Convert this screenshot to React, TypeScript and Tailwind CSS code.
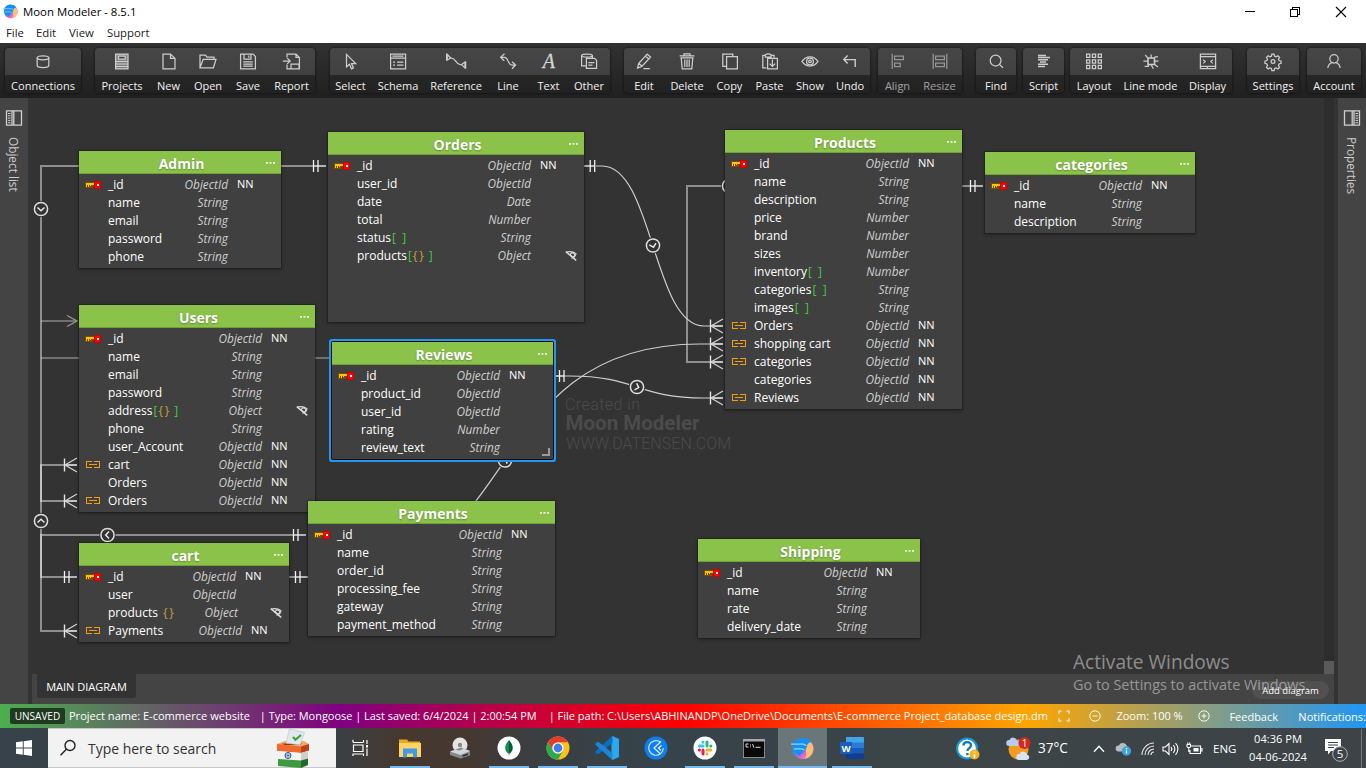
import type { ReactNode } from "react";

/* ---------- toolbar icons ---------- */

function Ico({ children, w = 18 }: { children: ReactNode; w?: number }) {
  return (
    <svg width={w} height="18" viewBox={`0 0 ${w} 18`} fill="none" stroke="#cdcdcd" strokeWidth="1.25" className="shrink-0 overflow-visible">
      {children}
    </svg>
  );
}

const icons: Record<string, ReactNode> = {
  Connections: (
    <Ico>
      <ellipse cx="9" cy="4.8" rx="5.8" ry="2" />
      <path d="M3.2 4.8v7.800c0 1.200 2.600 2 5.800 2s5.800-.8 5.800-2V4.800" />
    </Ico>
  ),
  Projects: (
    <Ico>
      <path d="M2.600 1h12.400v14.800H2.600z" fill="#808080" />
      <path d="M5.500 3.200h6.800v2.800H5.500z" fill="#444" />
      <path d="M3 8.500h12M3 11h12M3 13.500h12" strokeWidth="1" />
    </Ico>
  ),
  New: (
    <Ico>
      <path d="M3 1h7.500L15 5.400v10.400H3zM10.500 1v4.400H15" />
    </Ico>
  ),
  Open: (
    <Ico w={20}>
      <path d="M2 14.800V2h5.500L9 4h7v2.400M2 14.800L5.200 6.400H18l-2.600 8.400z" />
    </Ico>
  ),
  Save: (
    <Ico>
      <path d="M1.600 1H14l2.400 2.400v12.400H1.600zM5 1v5h7V1M9.800 2.400v2.400M4.200 8.800h9.600M4.200 11h9.600M4.200 13.200h9.600" />
    </Ico>
  ),
  Report: (
    <Ico w={20}>
      <path d="M5 4.400V1h9l3.400 3.400v11.400H5v-4.400M14 1v3.400h3.400M9 11h8v4.800H9zM.8 8h7M5.200 5.100l3 2.900-3 2.900" />
    </Ico>
  ),
  Select: (
    <Ico>
      <path d="M4.500 1.400v12.400l3-2.600 2 4.600 2-.9-2-4.400h4.200z" />
    </Ico>
  ),
  Schema: (
    <Ico>
      <path d="M1.600 1h15v14.800h-15zM1.600 5h15M3.500 3h11M4 9h2M8 9h6.500M4 12.200h2M8 12.200h6.500" />
    </Ico>
  ),
  Reference: (
    <Ico w={22}>
      <path d="M1.600 .6v7.200M1.600 .8l4 4.200-4 2.600M5.200 5h1.400c4 0 4.600 6.600 8.600 6.600h1.600M20.600 8.400v7.400M20.600 8.600l-4 3 4 4" />
      <path d="M2 2.500v4M20.200 10v4" strokeWidth="1.800" />
    </Ico>
  ),
  Line: (
    <Ico>
      <path d="M5.500 .8L1.600 4.200l3.600 3.600M1.600 4.400h3.800c4.400 0 3 7.600 7.600 7.600h3.400M13 8.800l3.600 3.200-3.600 3.800" />
    </Ico>
  ),
  Text: (
    <Ico w={20}>
      <text x="9.800" y="15" fontSize="20" fontStyle="italic" fontFamily="Liberation Serif, serif" textAnchor="middle" fill="#d6d6d6" stroke="#d6d6d6" strokeWidth="0.3">
        A
      </text>
    </Ico>
  ),
  Other: (
    <Ico>
      <ellipse cx="7" cy="2.600" rx="5.400" ry="1.600" />
      <path d="M1.600 2.600v10.200h4.600M12.400 2.600v2.600M6.400 5.400h8.200l2 2v8H6.400zM8.400 9.600h6M8.400 12h4" />
    </Ico>
  ),
  Edit: (
    <Ico>
      <path d="M12.200 1.200l3.400 2.800-8.800 9.400-4.200 1.600 1-4.400zM10.600 3.200l3.200 2.800M4 10.400l2.800 2.600M8.400 15.600h6.400" />
    </Ico>
  ),
  Delete: (
    <Ico>
      <path d="M1.600 2.800h14.800M6 2.600V.8h6v1.800M3.200 4.800l1 11h9.600l1-11M2.400 4.800h13.200M6.800 6.400V14M9 6.400V14M11.200 6.400V14" />
    </Ico>
  ),
  Copy: (
    <Ico>
      <path d="M5.600 3.600h10.800v12.200H5.600zM5.400 13.400H1.800V1h10v2.400" />
    </Ico>
  ),
  Paste: (
    <Ico>
      <path d="M5.400 14.800H1.800V2.400h2.600M10 2.400h3v2M4.400 4V1.600l2-.8h1.600l2 .8V4zM6.600 5.400h9.800v10.400H6.600zM11.400 6.400v7M8.600 10.600l2.800 2.800 2.800-2.800" />
    </Ico>
  ),
  Show: (
    <Ico>
      <path d="M1 8.400c2-3 5-4.600 8-4.600s6 1.600 8 4.600c-2 3-5 4.600-8 4.600s-6-1.600-8-4.600z" />
      <circle cx="9" cy="8.400" r="3.400" />
      <circle cx="9" cy="8.400" r="1.300" />
    </Ico>
  ),
  Undo: (
    <Ico>
      <path d="M6.600 2.600L2.800 6.600l3.800 4M2.800 6.600h11.400V14" strokeWidth="1.400" />
    </Ico>
  ),
  Align: (
    <Ico>
      <path d="M3.200 .8V16M5.600 3h8.800v3.600H5.600zM5.600 10h5.600v3.600H5.600z" />
    </Ico>
  ),
  Resize: (
    <Ico>
      <path d="M2.200 .8V16M15.800 .8V16M4.600 3h8.800v3.600H4.600zM4.600 10h8.800v3.600H4.600z" />
    </Ico>
  ),
  Find: (
    <Ico>
      <circle cx="8.600" cy="7.600" r="5.400" />
      <path d="M12.400 11.400l3.600 3.400" />
    </Ico>
  ),
  Script: (
    <Ico>
      <path d="M3 2.400h8M3 4.600h12M3 6.800h10M5 9h6M3 11.200h10M3 13.400h7" strokeWidth="1.500" />
    </Ico>
  ),
  Layout: (
    <Ico>
      <path d="M1.600 1.200h3.200v3.200H1.600zM7.400 1.200h3.200v3.200H7.400zM13.200 1.200h3.200v3.200h-3.200zM1.600 6.800h3.200V10H1.600zM7.400 6.800h3.200V10H7.400zM13.200 6.800h3.200V10h-3.200zM1.600 12.400h3.200v3.200H1.600zM7.400 12.400h3.200v3.200H7.400zM13.200 12.400h3.200v3.200h-3.200z" />
    </Ico>
  ),
  "Line mode": (
    <Ico>
      <path d="M6 5h6.500v6.500H6z" strokeWidth="1.600" />
      <path d="M9.200 5V1.600M3.200 2L6.400 5.600M16 3.800h-3.500M1.400 8.200H6M12.500 8.200h4M2.600 13.400h3.800v-2M9 11.500l2.400 4.200M12 11l4 3" />
    </Ico>
  ),
  Display: (
    <Ico>
      <path d="M1.400 1h15.200v14.600H1.400zM1.400 3.600h15.200M1.400 13.400h15.200M4.200 6.800l2 1.800-2 1.800M13.800 6.800l-2 1.800 2 1.800M8.400 13.400v2" />
    </Ico>
  ),
  Settings: (
    <Ico>
      <circle cx="9" cy="8.400" r="1.900" />
      <path d="M7.900 1.200h2.200l.5 2 1.500.6 1.800-1 1.600 1.600-1 1.800.6 1.400 2 .6v2.200l-2 .6-.6 1.500 1 1.800-1.600 1.600-1.800-1-1.500.6-.5 2H7.900l-.5-2-1.500-.6-1.800 1-1.600-1.600 1-1.800-.6-1.500-2-.6V8.200l2-.6.6-1.400-1-1.800 1.600-1.600 1.800 1 1.500-.6z" />
    </Ico>
  ),
  Account: (
    <Ico>
      <circle cx="9" cy="5.800" r="4.200" />
      <path d="M2.800 15c.4-3 2-4.600 4-5.400M15.200 15c-.4-3-2-4.600-4-5.400" />
    </Ico>
  ),
};

type Btn = [name: string, width: string];
const groups: { gap: string; dim?: boolean; items: Btn[] }[] = [
  { gap: "ml-[5px]", items: [["Connections", "w-[76px]"]] },
  {
    gap: "ml-[14px]",
    items: [
      ["Projects", "w-[54px]"],
      ["New", "w-[39px]"],
      ["Open", "w-[40px]"],
      ["Save", "w-[40px]"],
      ["Report", "w-[47px]"],
    ],
  },
  {
    gap: "ml-[15px]",
    items: [
      ["Select", "w-[41px]"],
      ["Schema", "w-[54px]"],
      ["Reference", "w-[62px]"],
      ["Line", "w-[42px]"],
      ["Text", "w-[39px]"],
      ["Other", "w-[42px]"],
    ],
  },
  {
    gap: "ml-[14px]",
    items: [
      ["Edit", "w-[40px]"],
      ["Delete", "w-[46px]"],
      ["Copy", "w-[39px]"],
      ["Paste", "w-[41px]"],
      ["Show", "w-[40px]"],
      ["Undo", "w-[40px]"],
    ],
  },
  {
    gap: "ml-[8px]",
    dim: true,
    items: [
      ["Align", "w-[39px]"],
      ["Resize", "w-[45px]"],
    ],
  },
  { gap: "ml-[14px]", items: [["Find", "w-[40px]"]] },
  { gap: "ml-[7px]", items: [["Script", "w-[41px]"]] },
  {
    gap: "ml-[6px]",
    items: [
      ["Layout", "w-[48px]"],
      ["Line mode", "w-[65px]"],
      ["Display", "w-[49px]"],
    ],
  },
  { gap: "ml-[15px]", items: [["Settings", "w-[52px]"]] },
  { gap: "ml-[8px]", items: [["Account", "w-[54px]"]] },
];

function MoonLogo({ size, id }: { size: number; id: string }) {
  return (
    <svg width={size} height={size} viewBox="0 0 24 24">
      <defs>
        <linearGradient id={id} x1="0.2" y1="0.3" x2="0.7" y2="1">
          <stop offset="0.35" stopColor="#1e9bf5" />
          <stop offset="0.6" stopColor="#c65fe0" />
          <stop offset="0.85" stopColor="#ff6fc0" />
        </linearGradient>
      </defs>
      <circle cx="12.500" cy="12" r="11" fill={`url(#${id})`} />
      <path d="M17 3.500c5 2 7 6 6.300 10-.8 5-4.300 8.500-8.800 9.300 1.500-2 1.500-5 1-8 0-4 3-6 1.500-11.300z" fill="#ffbf73" />
      <path d="M1.800 9C3 4 8 .8 13 1c4 .2 6.500 2 8 4.500-3 .5-5 2.500-5 5-.5 4-4.500 5-6.500 9C6 18 1 14 1.800 9z" fill="#1590f0" />
      <path d="M0 7.500h13l3 1.500M3 12.500h8l3 1" stroke="#8fd3ff" strokeWidth="1.300" fill="none" />
    </svg>
  );
}

function TitleBar() {
  return (
    <div className="h-[43px] bg-white text-[#000]">
      <div className="flex h-[23px] items-center pl-[3px]">
        <MoonLogo size={15} id="logo-small" />
        <span className="ml-[5px] text-[11.400px] leading-[23px]">Moon Modeler - 8.5.1</span>
        <svg className="mr-[18px] ml-auto" width="104" height="20" viewBox="0 0 104 20" fill="none" stroke="#000" strokeWidth="1" shapeRendering="crispEdges">
          <path d="M1 9.500h10" />
          <path d="M46.500 7.500h7v7h-7zM48.500 7V5.500h7v7H54" />
          <path d="M92 5l10 10M102 5l-10 10" shapeRendering="auto" strokeWidth="1.100" />
        </svg>
      </div>
      <div className="flex h-5 items-center text-[11.350px] text-[#222]">
        <span className="ml-[6px]">File</span>
        <span className="ml-[12px]">Edit</span>
        <span className="ml-[13px]">View</span>
        <span className="ml-[13px]">Support</span>
      </div>
    </div>
  );
}

function Toolbar() {
  return (
    <div className="flex h-[55px] bg-gradient-to-b from-[#323232] to-[#202020] pt-[5px]">
      {groups.map((g) => (
        <div
          key={g.items[0][0]}
          className={`${g.gap} flex h-[45px] rounded-[4px] bg-[linear-gradient(#464646_0px,#404040_27px,#262626_27px,#222222_45px)] shadow-[0_0_2px_1px_rgba(0,0,0,0.35)]`}
        >
          {g.items.map(([name, w]) => (
            <div key={name} className={`${w} flex flex-col items-center pt-[5px] ${g.dim ? "opacity-60" : ""}`}>
              {icons[name]}
              <span className="mt-[7px] text-[11px] leading-[16px] whitespace-nowrap text-[#f0f0f0]">{name}</span>
            </div>
          ))}
        </div>
      ))}
    </div>
  );
}

/* ---------- diagram ---------- */

type Mark = "array" | "objectArray" | "object";
interface Row {
  name: string;
  type: string;
  nn?: boolean;
  icon?: "key" | "link";
  mark?: Mark;
  hidden?: boolean;
  shift?: string;
}
interface Entity {
  id: string;
  title: string;
  x: number;
  y: number;
  w: number;
  h: number;
  selected?: boolean;
  rows: Row[];
}

const id: Row = { name: "_id", type: "ObjectId", nn: true, icon: "key" };
const s = (name: string): Row => ({ name, type: "String" });
const n = (name: string): Row => ({ name, type: "Number" });
const o = (name: string, nn = true): Row => ({ name, type: "ObjectId", nn });
const link = (name: string): Row => ({ name, type: "ObjectId", nn: true, icon: "link" });

const entities: Entity[] = [
  { id: "admin", title: "Admin", x: 79, y: 151, w: 202, h: 117, rows: [id, s("name"), s("email"), s("password"), s("phone")] },
  {
    id: "orders",
    title: "Orders",
    x: 328,
    y: 132,
    w: 256,
    h: 190,
    rows: [
      id,
      o("user_id", false),
      { name: "date", type: "Date" },
      n("total"),
      { name: "status", type: "String", mark: "array" },
      { name: "products", type: "Object", mark: "objectArray", hidden: true },
    ],
  },
  {
    id: "users",
    title: "Users",
    x: 79,
    y: 305,
    w: 236,
    h: 207,
    rows: [
      id,
      s("name"),
      s("email"),
      s("password"),
      { name: "address", type: "Object", mark: "objectArray", hidden: true },
      s("phone"),
      o("user_Account"),
      link("cart"),
      o("Orders"),
      link("Orders"),
    ],
  },
  {
    id: "cart",
    title: "cart",
    x: 79,
    y: 543,
    w: 210,
    h: 99,
    rows: [
      id,
      o("user", false),
      { name: "products", type: "Object", mark: "object", hidden: true, shift: "mr-[-2px]" },
      { ...link("Payments"), shift: "mr-[-6px]" },
    ],
  },
  {
    id: "payments",
    title: "Payments",
    x: 308,
    y: 501,
    w: 247,
    h: 135,
    rows: [id, s("name"), s("order_id"), s("processing_fee"), s("gateway"), s("payment_method")],
  },
  {
    id: "reviews",
    title: "Reviews",
    x: 332,
    y: 342,
    w: 221,
    h: 117,
    selected: true,
    rows: [id, o("product_id", false), o("user_id", false), n("rating"), s("review_text")],
  },
  {
    id: "products",
    title: "Products",
    x: 725,
    y: 130,
    w: 237,
    h: 279,
    rows: [
      id,
      s("name"),
      s("description"),
      n("price"),
      n("brand"),
      n("sizes"),
      { ...n("inventory"), mark: "array" },
      { ...s("categories"), mark: "array" },
      { ...s("images"), mark: "array" },
      link("Orders"),
      link("shopping cart"),
      link("categories"),
      o("categories"),
      link("Reviews"),
    ],
  },
  { id: "categories", title: "categories", x: 985, y: 152, w: 210, h: 81, rows: [id, s("name"), s("description")] },
  { id: "shipping", title: "Shipping", x: 698, y: 539, w: 222, h: 99, rows: [id, s("name"), s("rate"), s("delivery_date")] },
];

function KeyIcon() {
  return (
    <svg width="17" height="10" viewBox="0 0 17 10" shapeRendering="crispEdges">
      <path d="M0 2h10v4H8v2H0z" fill="#7a4d00" />
      <path d="M1 3h9v2H1zM1 5h1v2H1zM3 5h1v2H3zM5 5h1v1H5z" fill="#ffc400" />
      <path d="M9 1h7v8H9z" fill="#d00000" />
      <path d="M10 2h5v6h-5z" fill="#ff0000" />
      <path d="M12 4h2v2h-2z" fill="#fff" />
    </svg>
  );
}

function LinkIcon() {
  return (
    <svg width="16" height="8" viewBox="0 0 16 8" fill="none" stroke="#f59e0b" strokeWidth="1" shapeRendering="crispEdges">
      <path d="M7 .5H1.500v6H7M9 .5h5.500v6H9M4 3.500h8" />
    </svg>
  );
}

function HiddenIcon() {
  return (
    <svg width="13" height="12" viewBox="0 0 13 12" fill="none" stroke="#dcdcdc" strokeWidth="1.100">
      <path d="M1 2.200c4-1.200 7.500-.4 10 1.400-.4 2.400-2 4.200-4.600 4.600" />
      <ellipse cx="7.600" cy="4.800" rx="2.200" ry="1.700" transform="rotate(30 7.600 4.800)" />
      <path d="M.8 1.600l10.400 8.800" strokeWidth="1.500" />
    </svg>
  );
}

function MarkText({ mark }: { mark: Mark }) {
  if (mark === "array") return <span className="ml-px whitespace-pre text-[#3ccf3c]">{"[  ]"}</span>;
  if (mark === "object") return <span className="ml-[5px] tracking-[1.800px] text-[#c9a03a]">{"{}"}</span>;
  return (
    <span className="ml-px whitespace-pre text-[#3ccf3c]">
      [<span className="ml-px tracking-[1.900px] text-[#c9a03a]">{"{}"}</span>
      {" ]"}
    </span>
  );
}

function EntityCard({ e }: { e: Entity }) {
  return (
    <div
      className={`absolute bg-[#404040] ${
        e.selected
          ? "rounded-[1px] shadow-[0_0_0_1px_#0b0b0b,0_0_0_3px_#2196f3]"
          : "shadow-[0_0_0_1px_rgba(0,0,0,0.18),0_1px_4px_rgba(0,0,0,0.4)]"
      }`}
      style={{ left: e.x - 28, top: e.y - 98, width: e.w, height: e.h }}
    >
      <div className="relative flex h-[23px] items-center justify-center border-b border-[#6fa233] bg-[#8bc34a] pl-[3px]">
        <span className="mt-[3px] text-[14px] leading-5 font-bold text-white [text-shadow:0_1px_2px_rgba(0,0,0,0.3)]">{e.title}</span>
        <svg className="absolute top-[11px] right-[6px]" width="9" height="2" viewBox="0 0 9 2" fill="#f0f8e4">
          <path d="M0 0h2v1.700H0zM3.500 0h2v1.700h-2zM7 0h2v1.700H7z" />
        </svg>
      </div>
      <div className="pt-px">
        {e.rows.map((r, i) => (
          <div key={i} className="relative flex h-[18px] items-center pr-[53px]">
            <div className="mt-px flex w-[29px] shrink-0 items-center pl-[6px]">
              {r.icon === "key" && <KeyIcon />}
              {r.icon === "link" && <LinkIcon />}
            </div>
            <span className="mt-px text-[12px] leading-[18px] whitespace-nowrap text-white">
              {r.name}
              {r.mark && <MarkText mark={r.mark} />}
            </span>
            <span className={`relative ml-auto text-[11.800px] leading-[18px] text-[#cfcfcf] ${r.shift ?? ""}`}>
              <i>{r.type}</i>
              {r.nn && <span className="absolute top-0 left-full ml-[9px] text-[11px] text-white">NN</span>}
            </span>
            {r.hidden && (
              <span className="absolute top-[4px] right-[6px]">
                <HiddenIcon />
              </span>
            )}
          </div>
        ))}
      </div>
      {e.selected && <div className="absolute right-[3px] bottom-[3px] h-[8px] w-[8px] border-r-2 border-b-2 border-[#9a9a9a]" />}
    </div>
  );
}

function Crow({ x, y }: { x: number; y: number }) {
  return (
    <g transform={`translate(${x} ${y})`}>
      <path d="M-13 0H0" stroke="#c4c4c4" strokeWidth="2" />
      <path d="M-12.500 -6.500V6.500" stroke="#e6e6e6" strokeWidth="1.400" />
      <path d="M0 -7L-12 0L0 7" stroke="#d6d6d6" strokeWidth="1.200" />
    </g>
  );
}

function Bars({ x, y, end }: { x: number; y: number; end: number }) {
  return (
    <g>
      <path d={`M${Math.min(x, end)} ${y}H${Math.max(x + 4.5, end)}`} stroke="#b4b4b4" strokeWidth="2" />
      <path d={`M${x} ${y - 6}v12M${x + 4.5} ${y - 6}v12`} stroke="#f2f2f2" strokeWidth="1.300" />
    </g>
  );
}

function Knob({ x, y, r = 0 }: { x: number; y: number; r?: number }) {
  return (
    <g transform={`translate(${x} ${y})`}>
      <circle r="8.200" fill="#333" />
      <circle r="6.600" stroke="#dedede" strokeWidth="1.500" fill="#333" />
      <path d="M-3.500 -1.500L0 1.800L3.500 -1.500" transform={`rotate(${r})`} stroke="#e8e8e8" strokeWidth="1.500" />
    </g>
  );
}

function Canvas() {
  return (
    <div className="relative h-[576px] w-[1296px] overflow-hidden bg-[#333]">
      <svg className="absolute inset-0" width="1296" height="576" viewBox="28 98 1296 576" fill="none">
        <g fill="#4b4b4b" fontFamily="Roboto, sans-serif">
          <text x="565" y="409.500" fontSize="16" textLength="75" className="font-light">Created in</text>
          <text x="565.500" y="430" fontSize="20.500" fontWeight="700" textLength="134">Moon Modeler</text>
          <text x="566" y="448.500" fontSize="16" textLength="165" className="font-light">WWW.DATENSEN.COM</text>
        </g>
        <g stroke="#fff" strokeOpacity="0.450" strokeWidth="2">
          <path d="M326 166H41V501H77" />
          <path d="M77 465H41V577H77" />
          <path d="M77 631H41V535H306" />
          <path d="M41 321H76M41 358H332" strokeOpacity="0.300" />
          <path d="M289 577H310" />
          <path d="M723 186H687V362H712" />
          <path d="M960 186H983" />
        </g>
        <path d="M67 315.500L77 321L67 326.500" stroke="#999" strokeWidth="1.300" />
        <path d="M596 166H602C653 166 653 326 704 326H712" stroke="#cfcfcf" strokeWidth="1.200" />
        <path d="M562 376H569C637 376 637 398 704 398H712" stroke="#cfcfcf" strokeWidth="1.200" />
        <path d="M712 344H700C478 344 525 577 330 577" stroke="#cfcfcf" strokeWidth="1.200" />
        <Bars x={313.5} y={166} end={326} />
        <Bars x={590.2} y={166} end={584} />
        <Bars x={559.5} y={376} end={555} />
        <Bars x={970.5} y={186} end={983} />
        <Bars x={64.5} y={577} end={77} />
        <Bars x={293.5} y={535} end={306} />
        <Bars x={295.5} y={577} end={308} />
        <Crow x={77} y={465} />
        <Crow x={77} y={501} />
        <Crow x={77} y={631} />
        <Crow x={723} y={326} />
        <Crow x={723} y={344} />
        <Crow x={723} y={362} />
        <Crow x={723} y={398} />
        <Knob x={41} y={209} />
        <Knob x={41} y={521} r={180} />
        <Knob x={107.5} y={535} r={90} />
        <Knob x={653} y={245.5} r={-15} />
        <Knob x={637} y={387} r={-72} />
        <Knob x={505} y={460.5} r={215} />
        <Knob x={729} y={186} r={90} />
      </svg>
      {entities.map((e) => (
        <EntityCard key={e.id} e={e} />
      ))}
    </div>
  );
}

function PanelIcon({ flip }: { flip?: boolean }) {
  return (
    <svg width="18" height="16" viewBox="0 0 18 16" fill="none" stroke="#cfcfcf" strokeWidth="1.300" className={flip ? "-scale-x-100" : ""}>
      <path d="M1.500 .8h15v14.400h-15zM7 .8v14.400M8.800 .8v14.400" />
      <path d="M3 3.500h2.500M3 5.800h2.500M3 8.100h2.500M3 10.400h2.500M3 12.700h2.500" strokeWidth="1" />
    </svg>
  );
}

function SidePanel({ label, flip }: { label: string; flip?: boolean }) {
  return (
    <div className="flex w-7 shrink-0 flex-col items-center bg-[#444] pt-[12px]">
      <PanelIcon flip={flip} />
      <span className="mt-[10.500px] text-[11.800px] leading-[14px] text-[#cccccc] [writing-mode:vertical-rl]">{label}</span>
    </div>
  );
}

function StatusBar() {
  return (
    <div className="flex h-6 items-center overflow-hidden bg-[linear-gradient(90deg,#4caf50_0%,#800080_25%,#ff0000_50%,#ffa500_75%,#2196f3_100%)] text-[11px] whitespace-nowrap text-white">
      <span className="ml-[10px] h-4 w-[55px] rounded-[2px] bg-[#1f3a1f] text-center text-[10px] leading-4">UNSAVED</span>
      <span className="ml-1 w-[191px] text-[11.050px]">Project name: E-commerce website</span>
      <span className="w-[289px] text-[10.950px]">| Type: Mongoose | Last saved: 6/4/2024 | 2:00:54 PM</span>
      <span className="w-[510px]">| File path: C:\Users\ABHINANDP\OneDrive\Documents\E-commerce Project_database design.dm</span>
      <svg width="12" height="12" viewBox="0 0 12 12" fill="none" stroke="#fff3d8" strokeWidth="1.200" className="shrink-0">
        <path d="M1 3.800V1h2.800M8.200 1H11v2.800M11 8.200V11H8.200M3.800 11H1V8.200" />
      </svg>
      <svg width="12" height="12" viewBox="0 0 12 12" fill="none" stroke="#fff6e4" className="ml-[19px] shrink-0">
        <circle cx="6" cy="6" r="5.200" />
        <path d="M3.500 6h5" />
      </svg>
      <span className="ml-[15px] w-[82px]">Zoom: 100 %</span>
      <svg width="12" height="12" viewBox="0 0 12 12" fill="none" stroke="#fafaf4" className="shrink-0">
        <circle cx="6" cy="6" r="5.200" />
        <path d="M3.500 6h5M6 3.500v5" />
      </svg>
      <span className="mt-0.5 ml-[19px] w-[69px]">Feedback</span>
      <span className="mt-0.5">Notifications:</span>
    </div>
  );
}

/* ---------- taskbar ---------- */

function TaskItem({ children, on, active, w = "w-[49px]" }: { children?: ReactNode; on?: boolean; active?: boolean; w?: string }) {
  return (
    <div className={`${w} flex shrink-0 flex-col items-center ${active ? "bg-[#6a7678]" : ""}`}>
      <div className="flex h-[38px] items-center pt-[2px]">{children}</div>
      <div className={`h-[2px] ${active ? "w-full" : "w-10"} ${on ? "bg-[#76b9ed]" : ""}`} />
    </div>
  );
}

function BallotBox() {
  return (
    <svg width="34" height="39" viewBox="0 0 34 39">
      <path d="M1 15l8-3h19l5 3-6 3H4z" fill="#f7a566" />
      <path d="M6 14.500h20l-2 1.500H8z" fill="#8f3a14" />
      <path d="M13.500 0l15 3.500-4.500 12.500-14-2z" fill="#e2e8ef" stroke="#b8c2cc" strokeWidth=".6" />
      <path d="M17 8l2.500 2.800 5.500-4.800" stroke="#3aa62f" strokeWidth="2.200" fill="none" />
      <path d="M1 15l24 2.500V24L1 22z" fill="#ef6a2c" />
      <path d="M25 17.500l8-2.500v6.500L25 24z" fill="#b9441a" />
      <path d="M2 22l23 2v7.500L2 30z" fill="#f4f4f2" />
      <path d="M25 24l7-2v7.500l-7 2z" fill="#cfcfcf" />
      <path d="M2 30l23 1.500V39L2 37z" fill="#3d9a3f" />
      <path d="M25 31.500l7-2V36l-7 3z" fill="#226a28" />
      <circle cx="12" cy="26.500" r="3" fill="none" stroke="#2f4f9d" />
      <path d="M12 23.500v6M9 26.500h6M10 24.500l4 4M14 24.500l-4 4" stroke="#2f4f9d" strokeWidth=".5" />
    </svg>
  );
}

function Taskbar() {
  return (
    <div className="flex h-10 bg-[linear-gradient(90deg,#37424a_0px,#3a3f42_340px,#46382f_400px,#443831_470px,#3a3f42_540px,#36434a_640px,#384349_780px,#3c4547_900px,#3d4346_1366px)] text-white">
      <div className="flex w-12 shrink-0 items-center justify-center">
        <svg width="16" height="16" viewBox="0 0 16 16" fill="#fff">
          <path d="M0 2.200L6.800 1.300v6.300H0zM7.700 1.200L16 0v7.600H7.700zM0 8.400h6.800v6.300L0 13.800zM7.700 8.400H16V16l-8.300-1.200z" />
        </svg>
      </div>
      <div className="flex h-10 w-[288px] shrink-0 items-center border-y border-[#c8c8c8] bg-[#f2f2f2]">
        <svg className="ml-[11px]" width="18" height="18" viewBox="0 0 18 18" fill="none" stroke="#222" strokeWidth="1.400">
          <circle cx="11" cy="6.500" r="5" />
          <path d="M7.400 10.200L1.500 16.300" />
        </svg>
        <span className="mt-[2px] ml-[11px] w-[188px] text-[13.950px] text-[#333]">Type here to search</span>
        <BallotBox />
      </div>
      <TaskItem>
        <svg width="17" height="18" viewBox="0 0 17 18" fill="none" stroke="#fff" strokeWidth="1.200">
          <path d="M1 2V.8M1 3.500h10.500M1 1v2.500M11.500 1v2.500M1.500 6h9.500v6.500H1.500zM1 17v-2h10.500v2M15 1v4M15 9.500V17" />
          <path d="M14 6h2v2.400h-2z" fill="#fff" stroke="none" />
        </svg>
      </TaskItem>
      <TaskItem on w="w-[50px]">
        <svg width="22" height="19" viewBox="0 0 22 19">
          <path d="M0 .5h8l1.500 2H21V18H0z" fill="#e9a91c" />
          <path d="M0 4h22v14H0z" fill="#ffd364" />
          <path d="M4 18.500V9.500h14v9h-4v-4H8v4z" fill="#3d9be8" />
        </svg>
      </TaskItem>
      <TaskItem>
        <svg width="22" height="22" viewBox="0 0 22 22">
          <circle cx="11" cy="8" r="7.500" fill="#e4e4e4" />
          <path d="M1 14.500l11-4 9 3.500v4.500l-9.500 3L1 18z" fill="#85898c" />
          <path d="M1 14.500l10.500 3.500L21 14l-7-2.700C12 14 9 14 7 12.500z" fill="#d3d6d8" />
          <circle cx="11" cy="8" r="2.200" fill="#888" />
          <path d="M13.500 19l5.500-1.800" stroke="#2c2c2c" strokeWidth="1.500" />
        </svg>
      </TaskItem>
      <TaskItem on>
        <svg width="24" height="24" viewBox="0 0 24 24">
          <circle cx="12" cy="12" r="11.500" fill="#fff" />
          <path d="M12 4c-5.500 6-4.500 11-.3 13.800L12 20z" fill="#118d4d" />
          <path d="M12 4c5.500 6 4.500 11 .3 13.800L12 20z" fill="#0b5a3a" />
        </svg>
      </TaskItem>
      <TaskItem on>
        <svg width="24" height="24" viewBox="0 0 24 24">
          <circle cx="12" cy="12" r="11.500" fill="#fbc116" />
          <path d="M2.040 6.250A11.500 11.500 0 0 1 21.960 6.250H12A5.750 5.750 0 0 0 7 14.870z" fill="#e33b2e" />
          <path d="M2.040 6.250L7.020 14.870A5.750 5.750 0 0 0 16.980 14.870L12 23.500A11.500 11.500 0 0 1 2.040 6.250z" fill="#2da94f" />
          <circle cx="12" cy="12" r="5.600" fill="#fff" />
          <circle cx="12" cy="12" r="4.400" fill="#3f7df0" />
        </svg>
      </TaskItem>
      <TaskItem on>
        <svg width="24" height="24" viewBox="0 0 24 24">
          <path d="M17.500 0L24 3v18l-6.500 3-1-1V1z" fill="#2ba8f0" />
          <path d="M17.500 0v7L3 18.600.4 16.500v-1.200L16.500.8z" fill="#0a6fc2" />
          <path d="M17.500 24v-7L3 5.400.4 7.500v1.200l16.100 14.500z" fill="#1c86d6" />
        </svg>
      </TaskItem>
      <TaskItem>
        <svg width="24" height="24" viewBox="0 0 24 24" fill="none">
          <circle cx="12" cy="12" r="11.500" fill="#0f7df2" />
          <path d="M16.500 6.200A7.300 7.300 0 1 0 19.300 12" stroke="#cfe6ff" strokeWidth="1.200" />
          <path d="M17 5.500L10 12l6 5.500M17.500 9.500L14.500 12l2.500 2.500" stroke="#dff0ff" strokeWidth="1.200" />
        </svg>
      </TaskItem>
      <TaskItem on>
        <svg width="24" height="24" viewBox="0 0 24 24" fill="none" strokeWidth="3" strokeLinecap="round">
          <circle cx="12" cy="12" r="11.500" fill="#fff" stroke="none" />
          <path d="M10 6v.2M6.500 10h3.500" stroke="#36c5f0" />
          <path d="M14 6v4M17.700 10h.2" stroke="#2eb67d" />
          <path d="M14 14h3.700M14 17.800v.2" stroke="#ecb22e" />
          <path d="M10 14v4M6.300 14h.2" stroke="#e01e5a" />
        </svg>
      </TaskItem>
      <TaskItem on>
        <svg width="22" height="19" viewBox="0 0 22 19">
          <path d="M0 0h22v19H0z" fill="#a8a8a8" />
          <path d="M.8 2.500h20.400v15.700H.8z" fill="#0a0a0a" />
          <path d="M5.500 5H3v3h2.500M7.500 5.500v1M7.500 7.500v.8M9.500 5l1.500 3.500M12.500 8.300h5" stroke="#ddd" strokeWidth="1" fill="none" />
        </svg>
      </TaskItem>
      <TaskItem on active>
        <MoonLogo size={23} id="logo-task" />
      </TaskItem>
      <TaskItem on>
        <svg width="24" height="22" viewBox="0 0 24 22">
          <path d="M6 0h17a1 1 0 0 1 1 1v5H6z" fill="#41a5ee" />
          <path d="M6 5.500h18V11H6z" fill="#2b7cd3" />
          <path d="M6 11h18v5.500H6z" fill="#185abd" />
          <path d="M6 16.500h18V21a1 1 0 0 1-1 1H6z" fill="#103f91" />
          <rect x="0" y="5" width="12" height="12" rx="1" fill="#1a5dbe" />
          <text x="6" y="14.500" fontSize="9.500" fontWeight="700" fill="#fff" textAnchor="middle" fontFamily="Open Sans, sans-serif">W</text>
        </svg>
      </TaskItem>

      <div className="ml-auto flex items-center pt-px">
        <svg width="25" height="24" viewBox="0 0 25 24">
          <circle cx="11" cy="11.500" r="10" fill="#fff" stroke="#1795dd" strokeWidth="2.200" />
          <path d="M7.500 8.500c0-4.500 7.500-4.500 7.500-.2 0 2.800-3.500 2.900-3.500 5.700M11.400 16v2.200" stroke="#1579bd" strokeWidth="2.400" fill="none" />
          <circle cx="18.500" cy="17.500" r="5" fill="#f7b21b" />
          <path d="M18.500 14.500v1.300M18.500 17v4" stroke="#fff" strokeWidth="1.500" />
        </svg>
        <svg className="ml-[25px]" width="26" height="24" viewBox="0 0 26 24">
          <circle cx="12.500" cy="12.500" r="10" fill="#f39a22" />
          <path d="M3 9a3 3 0 0 1 .5-6A4 4 0 0 1 11 3.500 2.800 2.800 0 0 1 11 9z" fill="#b7cdf0" />
          <path d="M13 23a3 3 0 0 1 .5-6 4 4 0 0 1 7.500.5 2.800 2.800 0 0 1 0 5.500z" fill="#d6e4fa" />
          <circle cx="18.500" cy="6" r="6" fill="#d1281f" />
          <text x="18.500" y="9.800" fontSize="10" fill="#fff" textAnchor="middle" fontFamily="Open Sans, sans-serif">1</text>
        </svg>
        <span className="ml-[6px] w-[30px] text-[13.600px]">37°C</span>
        <svg className="ml-[25px]" width="12" height="8" viewBox="0 0 12 8" fill="none" stroke="#fff" strokeWidth="1.300">
          <path d="M1 6.800L6 1.300l5 5.500" />
        </svg>
        <svg className="ml-[10px]" width="17" height="14" viewBox="0 0 17 14">
          <path d="M3.500 9.500a3 3 0 0 1 .3-6A4.500 4.500 0 0 1 12 4a3 3 0 0 1 0 5.500z" fill="#b9bdc0" />
          <circle cx="11.500" cy="9" r="4.700" fill="#3aa3e3" />
          <path d="M11.500 6v1.300M11.500 8.300v3.300" stroke="#fff" strokeWidth="1.300" />
        </svg>
        <svg className="ml-[9px]" width="14" height="14" viewBox="0 0 14 14" fill="none" stroke="#e8e8e8" strokeWidth="1.100">
          <path d="M1 13A12 12 0 0 1 13 1" />
          <path d="M4 13a9 9 0 0 1 9-9M7 13a6 6 0 0 1 6-6M10 13a3 3 0 0 1 3-3" />
        </svg>
        <svg className="ml-[7px]" width="17" height="14" viewBox="0 0 17 14" fill="none" stroke="#fff" strokeWidth="1.100">
          <path d="M1 5v4h2.500L7 12.500v-11L3.500 5zM9 5a3 3 0 0 1 0 4M11.300 3.200a5.500 5.500 0 0 1 0 7.600M13.500 1.200a8.200 8.200 0 0 1 0 11.600" />
        </svg>
        <svg className="ml-[7px]" width="17" height="14" viewBox="0 0 17 14" fill="none" stroke="#fff" strokeWidth="1.100">
          <path d="M5 4h9.500v7.500H4V8M14.500 6.500H16v2.500h-1.500M1 2v2.500c0 1.500 3.500 1.500 3.500 0V2M.5 2.500h4.500M1.800.5V2M3.800.5V2M2.800 5.500V10" />
          <path d="M7.500 6h5v3.500h-5z" fill="#fff" stroke="none" />
        </svg>
        <span className="ml-[10px] w-[24px] text-[11.500px]">ENG</span>
        <div className="mt-[-2px] ml-[12px] w-[58px] text-center text-[11.100px] leading-[18px] whitespace-nowrap">
          <div>04:36 PM</div>
          <div>04-06-2024</div>
        </div>
        <svg className="ml-[18px]" width="26" height="26" viewBox="0 0 26 26">
          <path d="M0 3h16v12H6l-3 3.500V15H0z" fill="#fff" />
          <path d="M3 6.500h10M3 9h10M3 11.500h6" stroke="#3d4346" strokeWidth="1" />
          <circle cx="15" cy="18" r="7.300" fill="#3d4346" stroke="#aeb2b4" strokeWidth="1" />
          <text x="15" y="22.200" fontSize="11.500" fill="#fff" textAnchor="middle" fontFamily="Open Sans, sans-serif">5</text>
        </svg>
        <div className="ml-[10px] h-10 w-[5px] border-l border-[#777]" />
      </div>
    </div>
  );
}

export default function App() {
  return (
    <div className="relative flex h-[768px] w-[1366px] flex-col overflow-hidden font-['Open_Sans',sans-serif]">
      <TitleBar />
      <Toolbar />
      <div className="flex h-[606px]">
        <SidePanel label="Object list" />
        <div className="flex w-[1310px] shrink-0 flex-col bg-[#333]">
          <div className="flex">
            <Canvas />
            <div className="flex w-[10px] flex-col justify-end bg-[#2d2d2d]">
              <div className="h-[13px] bg-[#5a5a5a]" />
            </div>
          </div>
          <div className="mr-1 ml-1 flex h-[30px] items-start bg-[#444] pl-[5px]">
            <div className="h-6 w-[99px] rounded-b-[3px] bg-[#333] text-center text-[11px] leading-[25px] text-white">MAIN DIAGRAM</div>
            <div className="mt-[7px] mr-[5px] ml-auto h-[18px] w-[77px] rounded-full bg-[#505050] text-center text-[9.500px] leading-[19px] font-medium text-white">
              Add diagram
            </div>
          </div>
        </div>
        <SidePanel label="Properties" flip />
      </div>
      <StatusBar />
      <Taskbar />
      <div className="pointer-events-none absolute top-[649px] left-[1073px] whitespace-nowrap text-white/45">
        <div className="text-[19.100px] leading-[26px]">Activate Windows</div>
        <div className="text-[14.420px] leading-[20px]">Go to Settings to activate Windows.</div>
      </div>
    </div>
  );
}
